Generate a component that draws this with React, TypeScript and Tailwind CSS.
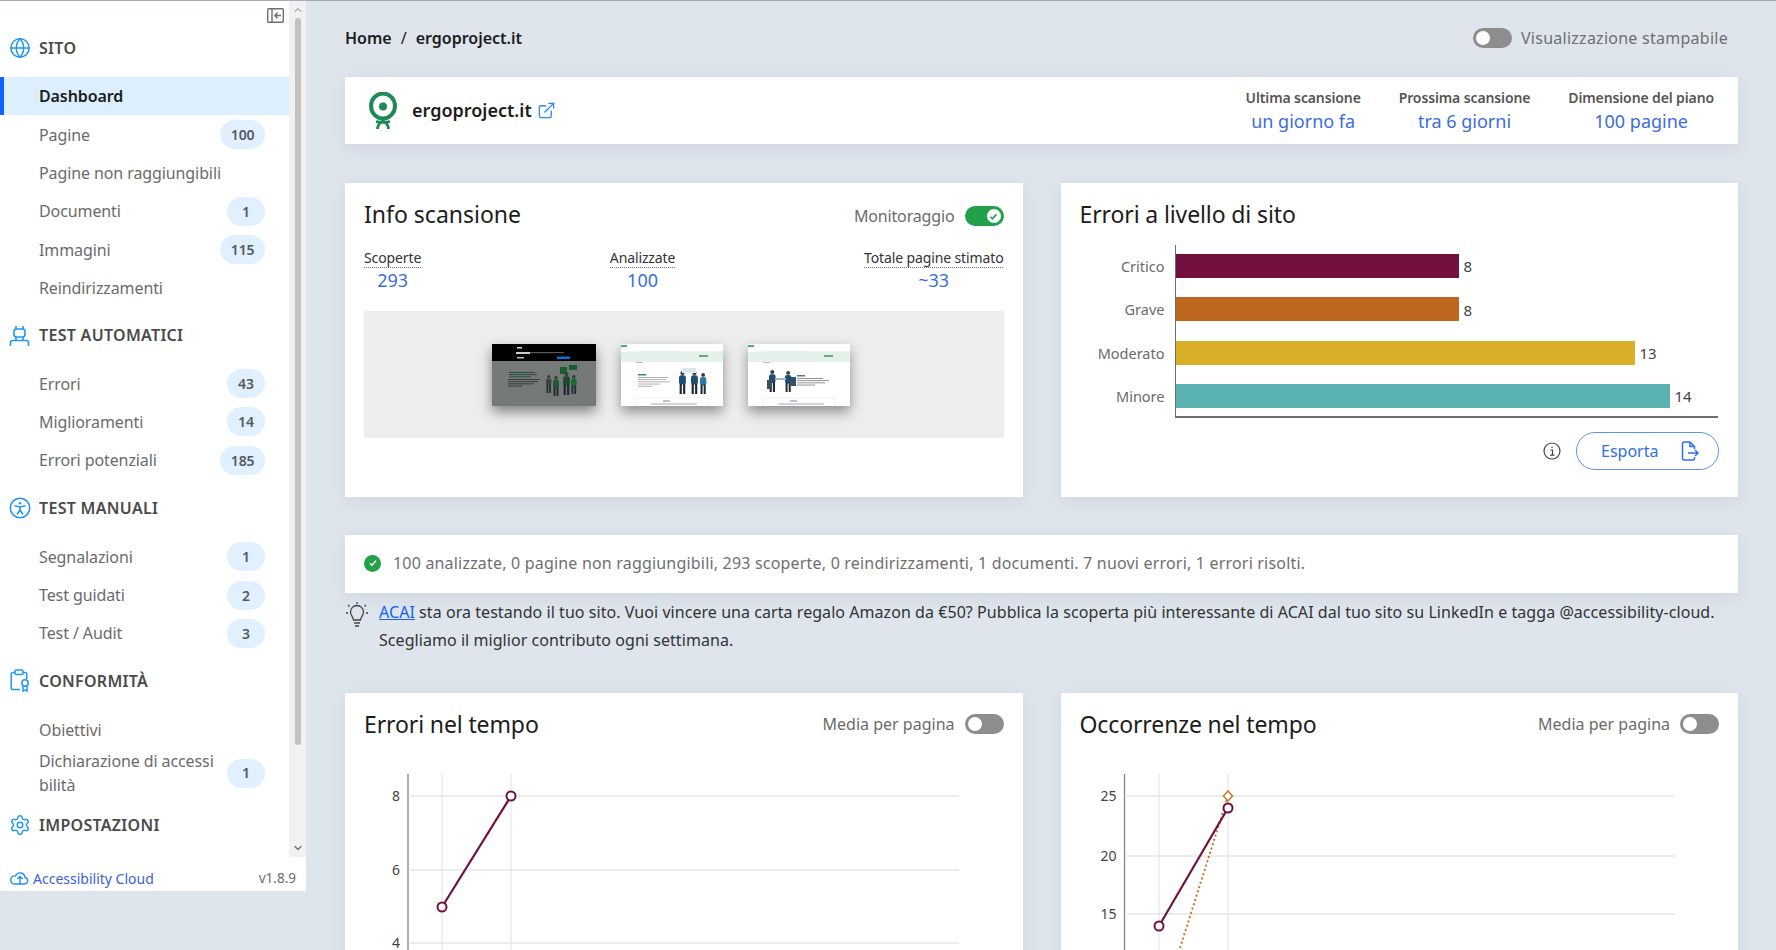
import { Globe, Settings, ExternalLink, ChevronUp, ChevronDown } from "lucide-react"

type NavItem = { label: React.ReactNode; count?: number; active?: boolean; tall?: boolean }

function Badge({ n }: { n: number }) {
  return (
    <span className={`flex h-[29px] items-center justify-center rounded-full bg-[#e0f0ff] text-[14px] font-semibold text-[#55595e] ${n >= 100 ? "w-[46px]" : "w-[38px]"}`}>
      {n}
    </span>
  )
}

function Row({ item }: { item: NavItem }) {
  return (
    <div
      className={`flex items-center justify-between pr-[24px] text-[16px] tracking-[-0.1px] ${item.tall ? "h-[48px] leading-[24px]" : "h-[38.4px]"} ${item.active ? "border-l-4 border-[#0f62fe] bg-[#dcefff] pl-[35px] font-semibold text-[#1c1c1c]" : "pl-[39px] text-[#6b6b6b]"}`}
    >
      <span className="w-[186px]">{item.label}</span>
      {item.count !== undefined && <Badge n={item.count} />}
    </div>
  )
}

function Heading({ icon, label }: { icon: React.ReactNode; label: string }) {
  return (
    <div className="flex h-[38px] items-center">
      <span className="flex w-[39px] justify-center text-[#2196f3]">{icon}</span>
      <span className="text-[16px] font-semibold tracking-[0.3px] text-[#4a4a4a]">{label}</span>
    </div>
  )
}

function RobotIcon() {
  return (
    <svg width="21" height="22" viewBox="0 0 21 22" fill="none" stroke="currentColor" strokeWidth="1.6" className="mt-[2px]">
      <path d="M7 1v3M14 1v3" />
      <rect x="5" y="4" width="11" height="8" rx="2.5" />
      <path d="M8 8h.1M13 8h.1" strokeWidth="2.2" />
      <path d="M7 12v3M14 12v3" />
      <path d="M1.5 21v-3.500a2 2 0 0 1 2-2h14a2 2 0 0 1 2 2V21" />
    </svg>
  )
}

function AccessIcon({ size = 22 }: { size?: number }) {
  return (
    <svg width={size} height={size} viewBox="0 0 22 22" fill="none" stroke="currentColor" strokeWidth="1.6">
      <circle cx="11" cy="11" r="9.700" />
      <circle cx="11" cy="6.200" r="1.300" fill="currentColor" stroke="none" />
      <path d="M5.500 8.700 11 10l5.500-1.300M11 10v3M11 13l-3 4.500M11 13l3 4.500" />
    </svg>
  )
}

function ClipboardIcon() {
  return (
    <svg width="20" height="23" viewBox="0 0 20 23" fill="none" stroke="currentColor" strokeWidth="1.5">
      <path d="M5 3.500H3a1.800 1.800 0 0 0-1.800 1.800v13.400A1.800 1.800 0 0 0 3 20.500h7" />
      <path d="M13 3.500h2a1.800 1.800 0 0 1 1.800 1.800V10" />
      <rect x="5" y="1" width="8" height="4.500" rx="1.200" />
      <circle cx="15" cy="14" r="3.200" />
      <path d="M13 17v5l2-1 2 1v-5" />
    </svg>
  )
}

function CollapseIcon() {
  return (
    <svg width="17" height="15" viewBox="0 0 17 15" fill="none" stroke="#6f6f6f" strokeWidth="1.400">
      <rect x=".7" y=".7" width="15.600" height="13.600" rx="1" />
      <path d="M5 1v13M14 7.500H8M10.500 4.800 7.800 7.500l2.700 2.700" />
    </svg>
  )
}

function CloudIcon() {
  return (
    <svg width="20" height="13" viewBox="0 0 20 13" fill="none" stroke="#1e90f0" strokeWidth="1.400">
      <path d="M5 12h10.500a3.300 3.300 0 0 0 .6-6.500A5 5 0 0 0 6.500 4 4 4 0 0 0 5 12Z" />
      <path d="M11 4.500V12M8.300 7 11 4.500 13.700 7" />
    </svg>
  )
}

function Toggle({ on }: { on?: boolean }) {
  return on ? (
    <span className="flex h-[20px] w-[39px] items-center justify-end rounded-full bg-[#22a04a] pr-[3px]">
      <span className="flex size-[14px] items-center justify-center rounded-full bg-white">
        <svg width="9" height="9" viewBox="0 0 9 9" fill="none" stroke="#22a04a" strokeWidth="1.600"><path d="m1.500 4.800 2 2 4-4.500" /></svg>
      </span>
    </span>
  ) : (
    <span className="flex h-[20px] w-[39px] items-center rounded-full bg-[#8d8d8d] pl-[3px]">
      <span className="size-[14px] rounded-full bg-white" />
    </span>
  )
}

function Logo() {
  return (
    <svg width="30" height="38" viewBox="0 0 30 38" fill="none">
      <ellipse cx="15" cy="14" rx="12" ry="12.500" stroke="#1f8a55" strokeWidth="4" />
      <circle cx="15" cy="14.500" r="4" fill="#1f8a55" />
      <path d="M15 26v3" stroke="#1f8a55" strokeWidth="3" />
      <path d="M8 29.500c4 1 10 1 14 0M9.500 37c0-4 3-7 5.500-7.500 2.500.5 5.500 3.500 5.500 7.500" stroke="#1f8a55" strokeWidth="2.800" />
    </svg>
  )
}

function Person({ x, y, h, color, skin = "#3a3a3a" }: { x: number; y: number; h: number; color: string; skin?: string }) {
  const w = h * 0.3
  return (
    <g>
      <circle cx={x + w / 2} cy={y + h * 0.09} r={h * 0.09} fill={skin} />
      <rect x={x} y={y + h * 0.19} width={w} height={h * 0.4} rx={w / 3} fill={color} />
      <path d={`M${x + w * 0.25} ${y + h * 0.55}v${h * 0.45}M${x + w * 0.75} ${y + h * 0.55}v${h * 0.45}`} stroke="#1f2a33" strokeWidth={w * 0.32} />
    </g>
  )
}

function Lines({ x, y, rows, color = "#999" }: { x: number; y: number; rows: number[]; color?: string }) {
  return (
    <>
      {rows.map((w, i) => <rect key={i} x={x} y={y + i * 2.2} width={w} height=".9" fill={color} />)}
    </>
  )
}

function Thumb1() {
  return (
    <div className="h-[62px] w-[104px] shrink-0 overflow-hidden shadow-[0_6px_12px_rgba(0,0,0,0.45)]">
      <svg width="104" height="62" viewBox="0 0 104 62" className="blur-[0.4px]">
        <rect width="104" height="62" fill="#757a78" />
        <rect width="104" height="17" fill="#000" />
        <rect x="25" y="3" width="5" height="1.500" fill="#ddd" />
        <rect x="24" y="8" width="14" height="2" fill="#ccc" />
        <rect x="38" y="8" width="34" height="1.200" fill="#555" />
        <rect x="25" y="13" width="7" height="1.500" fill="#bbb" />
        <rect x="65" y="12.500" width="13" height="2.500" fill="#0a6ed1" />
        <Lines x={17} y={28} rows={[26, 28, 22]} color="#1c4a32" />
        <Lines x={16} y={35} rows={[32, 30, 26, 14]} color="#2f3534" />
        <Person x={54} y={31} h={18} color="#3a4448" />
        <Person x={61} y={32} h={20} color="#1c5a34" />
        <Person x={71} y={28} h={23} color="#1c4a32" />
        <Person x={79} y={31} h={19} color="#1a6a2c" />
        <rect x="68" y="23" width="7" height="7" fill="#1c5a34" />
        <rect x="77" y="21" width="8" height="5" fill="#1c5a34" />
      </svg>
    </div>
  )
}

function Thumb2({ flip }: { flip?: boolean }) {
  return (
    <div className="h-[62px] w-[102px] shrink-0 overflow-hidden bg-white shadow-[0_6px_12px_rgba(0,0,0,0.4)]">
      <svg width="102" height="62" viewBox="0 0 102 62" className="blur-[0.4px]">
        <rect width="102" height="62" fill="#fff" />
        <rect x="0" y="1" width="6" height="2" fill="#4a9" />
        <path d="M0 8c30-2 60 0 102-1v11H0Z" fill="#e3f1ea" />
        <rect x={flip ? 76 : 78} y="11" width="9" height="2" fill="#6aa58a" />
        <rect x="15" y="18" width="7" height="1" fill="#bbb" />
        {flip ? (
          <>
            <Person x={21} y={26} h={22} color="#1f4f78" />
            <Person x={37} y={27} h={21} color="#1c4f78" />
            <rect x="27" y="34" width="11" height="2" fill="#a9b5bb" />
            <rect x="19" y="36" width="5" height="9" fill="#37505f" />
            <rect x="43" y="33" width="5" height="9" fill="#37505f" />
            <rect x="49" y="31" width="8" height="1.500" fill="#3d7fb0" />
            <Lines x={49} y={34} rows={[26, 32, 28, 18]} color="#888" />
          </>
        ) : (
          <>
            <rect x="17" y="30" width="8" height="1.500" fill="#3d7fb0" />
            <Lines x={17} y={33} rows={[30, 28, 32, 22, 14]} color="#aaa" />
            <Person x={58} y={27} h={23} color="#1c4f78" />
            <Person x={70} y={27} h={23} color="#1f4f78" />
            <Person x={79} y={29} h={21} color="#2a78b0" />
            <rect x="61" y="24" width="14" height="5" fill="#dfe7ee" />
          </>
        )}
        <rect x="15" y="54" width="72" height="9" fill="none" stroke="#e6e6e6" strokeWidth=".6" />
        <rect x="42" y="56.500" width="7" height="1" fill="#5b8fb5" />
        <rect x="30" y="59.500" width="46" height="1" fill="#aaa" />
      </svg>
    </div>
  )
}

function Stat({ label, value }: { label: string; value: string }) {
  return (
    <div className="flex flex-col items-center">
      <span className="text-[14px] font-semibold leading-[20px] tracking-[-0.12px] text-[#555]">{label}</span>
      <span className="text-[18px] leading-[26px] text-[#3d6ce0]">{value}</span>
    </div>
  )
}

function Metric({ label, value }: { label: string; value: string }) {
  return (
    <div className="flex flex-col items-center">
      <span className="border-b border-dotted border-[#777] text-[14px] leading-[19px] tracking-[-0.12px] text-[#333]">{label}</span>
      <span className="text-[18px] leading-[25px] text-[#3d6ce0]">{value}</span>
    </div>
  )
}

const bars = [
  { label: "Critico", value: 8, w: "w-[283px]", color: "bg-[#72113f]" },
  { label: "Grave", value: 8, w: "w-[283px]", color: "bg-[#bd671f]" },
  { label: "Moderato", value: 13, w: "w-[459px]", color: "bg-[#d8af26]" },
  { label: "Minore", value: 14, w: "w-[494px]", color: "bg-[#5ab3b0]" },
]

function ErrorsChart() {
  return (
    <div className="mt-[14px] flex">
      <div className="flex w-[95px] flex-col gap-[19.300px] pt-[10px] pr-[10px] text-right text-[14.500px] text-[#6b6b6b]">
        {bars.map(b => (
          <div key={b.label} className="flex h-[24px] items-center justify-end">{b.label}</div>
        ))}
      </div>
      <div className="flex h-[173px] w-[543px] flex-col gap-[19.300px] border-b-2 border-l border-[#6f6f6f] pt-[9px]">
        {bars.map(b => (
          <div key={b.label} className="flex items-center gap-[5px]">
            <div className={`h-[24px] ${b.w} ${b.color}`} />
            <span className="pt-[1px] text-[15px] text-[#444]">{b.value}</span>
          </div>
        ))}
      </div>
    </div>
  )
}

function LineChart({ left }: { left?: boolean }) {
  const font = "'Noto Sans', sans-serif"
  const grid = left ? [[796, "8"], [870, "6"], [943, "4"]] : [[796, "25"], [856, "20"], [914, "15"]]
  const ax = left ? 408 : 1124.5
  const end = left ? 959 : 1675
  const vx = left ? [442, 511] : [1159, 1228]
  const x0 = left ? 364 : 1080
  const pts = left ? [[442, 907], [511, 796]] : [[1159, 926], [1228, 808]]
  return (
    <svg width="640" height="186" viewBox={`${x0} 764 640 186`} className="mt-[24px] block">
      {grid.map(([y, t]) => (
        <g key={String(t)}>
          <line x1={ax + 2} x2={end} y1={y as number} y2={y as number} stroke="#ececec" strokeWidth="2" />
          <text x={ax - 8} y={(y as number) + 5} textAnchor="end" fontSize="14" fill="#444" fontFamily={font}>{t}</text>
        </g>
      ))}
      {vx.map(x => <line key={x} x1={x} x2={x} y1="774" y2="950" stroke="#e6e6e6" strokeWidth="1.200" />)}
      <line x1={ax} x2={ax} y1="774" y2="950" stroke="#8d8d8d" strokeWidth="1.400" />
      {!left && <line x1="1228" y1="796" x2="1175" y2="964" stroke="#c8761f" strokeWidth="2" strokeDasharray="2 2.500" />}
      <line x1={pts[0][0]} y1={pts[0][1]} x2={pts[1][0]} y2={pts[1][1]} stroke="#72113f" strokeWidth="2.200" />
      {pts.map(([x, y]) => <circle key={x} cx={x} cy={y} r="4.500" fill="#fff" stroke="#72113f" strokeWidth="2" />)}
      {!left && <path d="m1228 791 4.500 5-4.500 5-4.500-5Z" fill="#fff" stroke="#c8761f" strokeWidth="1.500" />}
    </svg>
  )
}

function TimeCard({ title, left }: { title: string; left?: boolean }) {
  return (
    <div className="h-[340px] bg-white px-[19px] pt-[15px] shadow-[0_4px_16px_rgba(0,40,80,0.08)]">
      <div className="flex h-[32px] items-center justify-between">
        <h2 className="text-[23px] tracking-[-0.12px] text-[#1c1c1c]">{title}</h2>
        <div className="flex items-center gap-[10px] text-[16px] text-[#6b6b6b]">
          Media per pagina <Toggle />
        </div>
      </div>
      <LineChart left={left} />
    </div>
  )
}

export default function App() {
  return (
    <div className="flex h-[950px] w-[1776px] items-start overflow-hidden border-t border-[#a4adb8] bg-[#dee5ed] font-['Noto_Sans',sans-serif]">
      {/* Sidebar */}
      <aside className="h-[890px] w-[306px] shrink-0 bg-white">
        <div className="flex h-[856px]">
          <nav className="w-[289px]">
            <div className="flex h-[28px] justify-end pt-[7px] pr-[5px]"><CollapseIcon /></div>
            <div className="mb-[10px]"><Heading icon={<Globe size={22} strokeWidth={1.6} />} label="SITO" /></div>
            <Row item={{ label: "Dashboard", active: true }} />
            <Row item={{ label: "Pagine", count: 100 }} />
            <Row item={{ label: "Pagine non raggiungibili" }} />
            <Row item={{ label: "Documenti", count: 1 }} />
            <Row item={{ label: "Immagini", count: 115 }} />
            <Row item={{ label: "Reindirizzamenti" }} />
            <div className="mt-[9px] mb-[10px]"><Heading icon={<RobotIcon />} label="TEST AUTOMATICI" /></div>
            <Row item={{ label: "Errori", count: 43 }} />
            <Row item={{ label: "Miglioramenti", count: 14 }} />
            <Row item={{ label: "Errori potenziali", count: 185 }} />
            <div className="mt-[9px] mb-[11px]"><Heading icon={<AccessIcon />} label="TEST MANUALI" /></div>
            <Row item={{ label: "Segnalazioni", count: 1 }} />
            <Row item={{ label: "Test guidati", count: 2 }} />
            <Row item={{ label: "Test / Audit", count: 3 }} />
            <div className="mt-[9px] mb-[11px]"><Heading icon={<ClipboardIcon />} label="CONFORMITÀ" /></div>
            <Row item={{ label: "Obiettivi" }} />
            <Row item={{ label: <>Dichiarazione di accessi<br />bilità</>, count: 1, tall: true }} />
            <div className="mt-[9px]"><Heading icon={<Settings size={22} strokeWidth={1.6} />} label="IMPOSTAZIONI" /></div>
          </nav>
          <div className="flex w-[17px] flex-col items-center bg-[#f1f1f1] text-[#777]">
            <ChevronUp size={12} className="mt-[3px] h-[12px]" />
            <div className="mt-[2px] h-[727px] w-[6px] rounded-full bg-[#c1c1c1]" />
            <ChevronDown size={12} className="mt-auto mb-[3px]" strokeWidth={3} />
          </div>
        </div>
        <div className="flex h-[34px] items-center justify-between pt-[8px] pr-[10px] pl-[9px]">
          <span className="flex items-center gap-[4px] text-[14px] text-[#3b5fe0]"><CloudIcon />Accessibility Cloud</span>
          <span className="text-[13.500px] text-[#6b6b6b]">v1.8.9</span>
        </div>
      </aside>

      {/* Main */}
      <main className="w-[1470px] pr-[38px] pl-[39px]">
        <div className="flex h-[76px] items-center justify-between pr-[10px] pb-[2px]">
          <div className="flex items-center gap-[9px] text-[16px] font-semibold text-[#1c1c1c]">
            <span>Home</span><span className="font-normal">/</span><span>ergoproject.it</span>
          </div>
          <div className="flex items-center gap-[9px] text-[16px] tracking-[0.26px] text-[#6f6f6f]">
            <Toggle /> Visualizzazione stampabile
          </div>
        </div>

        <div className="flex h-[67px] items-center justify-between bg-white pr-[24px] pl-[23px] shadow-[0_4px_16px_rgba(0,40,80,0.08)]">
          <div className="flex items-center">
            <Logo />
            <span className="ml-[14px] text-[18px] font-semibold text-[#1c1c1c]">ergoproject.it</span>
            <ExternalLink size={19} strokeWidth={1.700} className="ml-[5px] text-[#2f86f0]" />
          </div>
          <div className="flex gap-[38px]">
            <Stat label="Ultima scansione" value="un giorno fa" />
            <Stat label="Prossima scansione" value="tra 6 giorni" />
            <Stat label="Dimensione del piano" value="100 pagine" />
          </div>
        </div>

        <div className="mt-[39px] grid grid-cols-2 gap-[38px]">
          <section className="h-[314px] bg-white px-[19px] pt-[15px] shadow-[0_4px_16px_rgba(0,40,80,0.08)]">
            <div className="flex h-[32px] items-center justify-between">
              <h2 className="text-[23px] text-[#1c1c1c]">Info scansione</h2>
              <div className="flex items-center gap-[10px] pt-[4px] text-[16px] tracking-[-0.15px] text-[#6b6b6b]">Monitoraggio <Toggle on /></div>
            </div>
            <div className="mt-[18px] flex justify-between">
              <Metric label="Scoperte" value="293" />
              <Metric label="Analizzate" value="100" />
              <Metric label="Totale pagine stimato" value="~33" />
            </div>
            <div className="mt-[18px] flex h-[127px] items-center justify-start gap-[25px] bg-[#ededed] pt-[1px] pl-[128px]">
              <Thumb1 />
              <Thumb2 />
              <Thumb2 flip />
            </div>
          </section>

          <section className="h-[314px] bg-white px-[19px] pt-[15px] shadow-[0_4px_16px_rgba(0,40,80,0.08)]">
            <h2 className="flex h-[32px] items-center text-[23px] tracking-[-0.12px] text-[#1c1c1c]">Errori a livello di sito</h2>
            <div className="pt-[1px]"><ErrorsChart /></div>
            <div className="mt-[14px] flex items-center justify-end gap-[15px]">
              <svg width="18" height="18" viewBox="0 0 18 18" fill="none" stroke="#444" strokeWidth="1.200">
                <circle cx="9" cy="9" r="8" />
                <path d="M7.500 8h2v5M7 13.200h4.500" />
                <circle cx="9" cy="5.300" r=".8" fill="#444" stroke="none" />
              </svg>
              <button className="flex h-[38px] w-[143px] items-center justify-between rounded-full border-[1.500px] border-[#5b94f5] pr-[19px] pl-[24px] text-[16px] text-[#2f6fed]">
                Esporta
                <svg width="18" height="20" viewBox="0 0 18 20" fill="none" stroke="#2f6fed" strokeWidth="1.500">
                  <path d="M9 1H3a1.500 1.500 0 0 0-1.500 1.500v15A1.500 1.500 0 0 0 3 19h9a1.500 1.500 0 0 0 1.500-1.500V16" />
                  <path d="M9 1v4.500h4.500M9 1l4.500 4.500V8" />
                  <path d="M7 12h10M14 9l3 3-3 3" />
                </svg>
              </button>
            </div>
          </section>
        </div>

        <div className="mt-[38px] flex h-[58px] items-center gap-[12px] bg-white pb-[2px] pl-[19px] text-[16px] tracking-[0.19px] text-[#6f6f6f] shadow-[0_4px_16px_rgba(0,40,80,0.08)]">
          <span className="flex size-[17px] items-center justify-center rounded-full bg-[#22a04a]">
            <svg width="10" height="10" viewBox="0 0 10 10" fill="none" stroke="#fff" strokeWidth="1.600"><path d="m2 5.200 2 2 4-4.500" /></svg>
          </span>
          100 analizzate, 0 pagine non raggiungibili, 293 scoperte, 0 reindirizzamenti, 1 documenti. 7 nuovi errori, 1 errori risolti.
        </div>

        <div className="mt-[5px] flex items-start">
          <svg width="24" height="27" viewBox="0 0 24 27" fill="none" stroke="#444" strokeWidth="1.300" className="mt-[3px] shrink-0">
            <path d="M12 1v2M3 4l1.500 1.500M21 4l-1.500 1.500M1 12h2M21 12h2" />
            <path d="M8.500 19c0-3-3-4-3-8a6.500 6.500 0 0 1 13 0c0 4-3 5-3 8Z" />
            <path d="M9 22h6M10 25h4" />
          </svg>
          <p className="ml-[10px] text-[16px] leading-[28px] tracking-[0.055px] text-[#333]">
            <a className="text-[#0f62fe] underline">ACAI</a> sta ora testando il tuo sito. Vuoi vincere una carta regalo Amazon da €50? Pubblica la scoperta più interessante di ACAI dal tuo sito su LinkedIn e tagga @accessibility-cloud.
            <br />
            Scegliamo il miglior contributo ogni settimana.
          </p>
        </div>

        <div className="mt-[39px] grid grid-cols-2 gap-[38px]">
          <TimeCard title="Errori nel tempo" left />
          <TimeCard title="Occorrenze nel tempo" />
        </div>
      </main>
    </div>
  )
}
